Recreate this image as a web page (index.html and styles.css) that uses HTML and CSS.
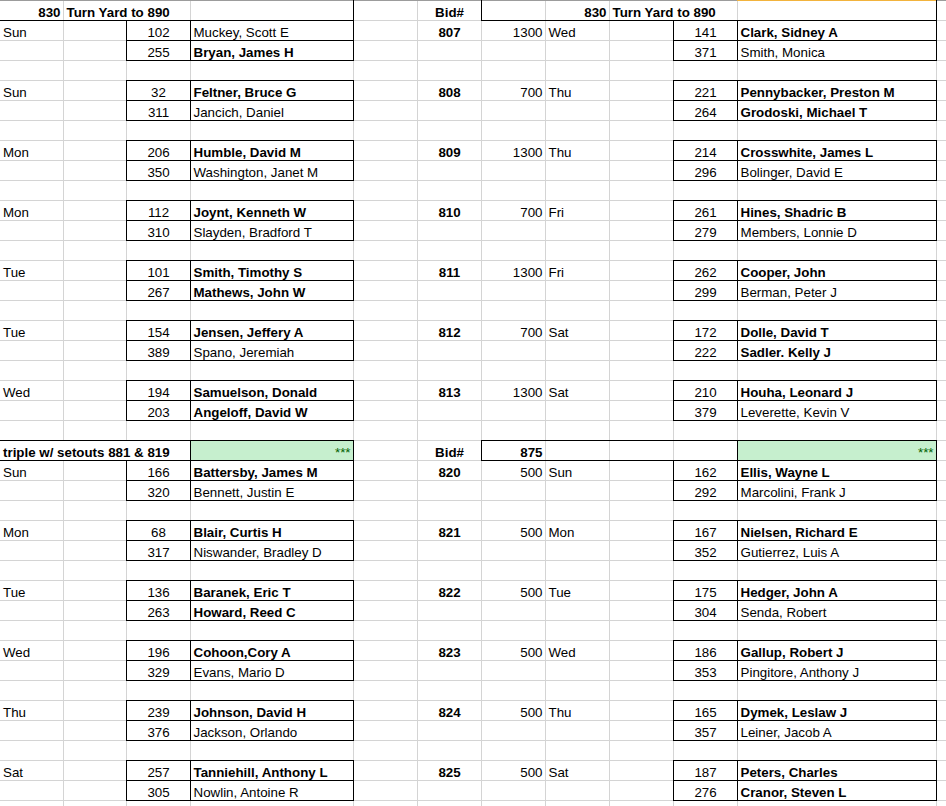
FILE: index.html
```html
<!DOCTYPE html>
<html>
<head>
<meta charset="utf-8">
<link rel="stylesheet" href="styles.css">
</head>
<body>
<table class="sheet">
<colgroup>
<col class="w63"><col class="w63"><col class="w64"><col class="w163"><col class="w64"><col class="w64"><col class="w64"><col class="w64"><col class="w64"><col class="w64"><col class="w199"><col class="w10">
</colgroup>
<tbody>
<tr class="top"><td class="r b bb">830</td><td colspan="2" class="b bb">Turn Yard to 890</td><td class="bb br"></td><td></td><td class="c b">Bid#</td><td class="bb bl"></td><td class="r b bb">830</td><td colspan="2" class="b bb">Turn Yard to 890</td><td class="bb br sel"></td><td></td></tr>

<tr><td>Sun</td><td></td><td class="c bx">102</td><td class="bx">Muckey, Scott E</td><td></td><td class="c b">807</td><td class="r">1300</td><td>Wed</td><td></td><td class="c bx">141</td><td class="bx b">Clark, Sidney A</td><td></td></tr>
<tr><td></td><td></td><td class="c bx">255</td><td class="bx b">Bryan, James H</td><td></td><td></td><td></td><td></td><td></td><td class="c bx">371</td><td class="bx">Smith, Monica</td><td></td></tr>
<tr><td></td><td></td><td></td><td></td><td></td><td></td><td></td><td></td><td></td><td></td><td></td><td></td></tr>

<tr><td>Sun</td><td></td><td class="c bx">32</td><td class="bx b">Feltner, Bruce G</td><td></td><td class="c b">808</td><td class="r">700</td><td>Thu</td><td></td><td class="c bx">221</td><td class="bx b">Pennybacker, Preston M</td><td></td></tr>
<tr><td></td><td></td><td class="c bx">311</td><td class="bx">Jancich, Daniel</td><td></td><td></td><td></td><td></td><td></td><td class="c bx">264</td><td class="bx b">Grodoski, Michael T</td><td></td></tr>
<tr><td></td><td></td><td></td><td></td><td></td><td></td><td></td><td></td><td></td><td></td><td></td><td></td></tr>

<tr><td>Mon</td><td></td><td class="c bx">206</td><td class="bx b">Humble, David M</td><td></td><td class="c b">809</td><td class="r">1300</td><td>Thu</td><td></td><td class="c bx">214</td><td class="bx b">Crosswhite, James L</td><td></td></tr>
<tr><td></td><td></td><td class="c bx">350</td><td class="bx">Washington, Janet M</td><td></td><td></td><td></td><td></td><td></td><td class="c bx">296</td><td class="bx">Bolinger, David E</td><td></td></tr>
<tr><td></td><td></td><td></td><td></td><td></td><td></td><td></td><td></td><td></td><td></td><td></td><td></td></tr>

<tr><td>Mon</td><td></td><td class="c bx">112</td><td class="bx b">Joynt, Kenneth W</td><td></td><td class="c b">810</td><td class="r">700</td><td>Fri</td><td></td><td class="c bx">261</td><td class="bx b">Hines, Shadric B</td><td></td></tr>
<tr><td></td><td></td><td class="c bx">310</td><td class="bx">Slayden, Bradford T</td><td></td><td></td><td></td><td></td><td></td><td class="c bx">279</td><td class="bx">Members, Lonnie D</td><td></td></tr>
<tr><td></td><td></td><td></td><td></td><td></td><td></td><td></td><td></td><td></td><td></td><td></td><td></td></tr>

<tr><td>Tue</td><td></td><td class="c bx">101</td><td class="bx b">Smith, Timothy S</td><td></td><td class="c b">811</td><td class="r">1300</td><td>Fri</td><td></td><td class="c bx">262</td><td class="bx b">Cooper, John</td><td></td></tr>
<tr><td></td><td></td><td class="c bx">267</td><td class="bx b">Mathews, John W</td><td></td><td></td><td></td><td></td><td></td><td class="c bx">299</td><td class="bx">Berman, Peter J</td><td></td></tr>
<tr><td></td><td></td><td></td><td></td><td></td><td></td><td></td><td></td><td></td><td></td><td></td><td></td></tr>

<tr><td>Tue</td><td></td><td class="c bx">154</td><td class="bx b">Jensen, Jeffery A</td><td></td><td class="c b">812</td><td class="r">700</td><td>Sat</td><td></td><td class="c bx">172</td><td class="bx b">Dolle, David T</td><td></td></tr>
<tr><td></td><td></td><td class="c bx">389</td><td class="bx">Spano, Jeremiah</td><td></td><td></td><td></td><td></td><td></td><td class="c bx">222</td><td class="bx b">Sadler. Kelly J</td><td></td></tr>
<tr><td></td><td></td><td></td><td></td><td></td><td></td><td></td><td></td><td></td><td></td><td></td><td></td></tr>

<tr><td>Wed</td><td></td><td class="c bx">194</td><td class="bx b">Samuelson, Donald</td><td></td><td class="c b">813</td><td class="r">1300</td><td>Sat</td><td></td><td class="c bx">210</td><td class="bx b">Houha, Leonard J</td><td></td></tr>
<tr><td></td><td></td><td class="c bx">203</td><td class="bx b">Angeloff, David W</td><td></td><td></td><td></td><td></td><td></td><td class="c bx">379</td><td class="bx">Leverette, Kevin V</td><td></td></tr>
<tr><td></td><td></td><td></td><td></td><td></td><td></td><td></td><td></td><td></td><td></td><td></td><td></td></tr>

<tr><td colspan="3" class="b bt bb">triple w/ setouts 881 &amp; 819</td><td class="r bx good">***</td><td></td><td class="c b">Bid#</td><td class="r b bt bb bl">875</td><td class="bt bb"></td><td class="bt bb"></td><td class="bt bb"></td><td class="r bx good">***</td><td></td></tr>

<tr><td>Sun</td><td></td><td class="c bx">166</td><td class="bx b">Battersby, James M</td><td></td><td class="c b">820</td><td class="r">500</td><td>Sun</td><td></td><td class="c bx">162</td><td class="bx b">Ellis, Wayne L</td><td></td></tr>
<tr><td></td><td></td><td class="c bx">320</td><td class="bx">Bennett, Justin E</td><td></td><td></td><td></td><td></td><td></td><td class="c bx">292</td><td class="bx">Marcolini, Frank J</td><td></td></tr>
<tr><td></td><td></td><td></td><td></td><td></td><td></td><td></td><td></td><td></td><td></td><td></td><td></td></tr>

<tr><td>Mon</td><td></td><td class="c bx">68</td><td class="bx b">Blair, Curtis H</td><td></td><td class="c b">821</td><td class="r">500</td><td>Mon</td><td></td><td class="c bx">167</td><td class="bx b">Nielsen, Richard E</td><td></td></tr>
<tr><td></td><td></td><td class="c bx">317</td><td class="bx">Niswander, Bradley D</td><td></td><td></td><td></td><td></td><td></td><td class="c bx">352</td><td class="bx">Gutierrez, Luis A</td><td></td></tr>
<tr><td></td><td></td><td></td><td></td><td></td><td></td><td></td><td></td><td></td><td></td><td></td><td></td></tr>

<tr><td>Tue</td><td></td><td class="c bx">136</td><td class="bx b">Baranek, Eric T</td><td></td><td class="c b">822</td><td class="r">500</td><td>Tue</td><td></td><td class="c bx">175</td><td class="bx b">Hedger, John A</td><td></td></tr>
<tr><td></td><td></td><td class="c bx">263</td><td class="bx b">Howard, Reed C</td><td></td><td></td><td></td><td></td><td></td><td class="c bx">304</td><td class="bx">Senda, Robert</td><td></td></tr>
<tr><td></td><td></td><td></td><td></td><td></td><td></td><td></td><td></td><td></td><td></td><td></td><td></td></tr>

<tr><td>Wed</td><td></td><td class="c bx">196</td><td class="bx b">Cohoon,Cory A</td><td></td><td class="c b">823</td><td class="r">500</td><td>Wed</td><td></td><td class="c bx">186</td><td class="bx b">Gallup, Robert J</td><td></td></tr>
<tr><td></td><td></td><td class="c bx">329</td><td class="bx">Evans, Mario D</td><td></td><td></td><td></td><td></td><td></td><td class="c bx">353</td><td class="bx">Pingitore, Anthony J</td><td></td></tr>
<tr><td></td><td></td><td></td><td></td><td></td><td></td><td></td><td></td><td></td><td></td><td></td><td></td></tr>

<tr><td>Thu</td><td></td><td class="c bx">239</td><td class="bx b">Johnson, David H</td><td></td><td class="c b">824</td><td class="r">500</td><td>Thu</td><td></td><td class="c bx">165</td><td class="bx b">Dymek, Leslaw J</td><td></td></tr>
<tr><td></td><td></td><td class="c bx">376</td><td class="bx">Jackson, Orlando</td><td></td><td></td><td></td><td></td><td></td><td class="c bx">357</td><td class="bx">Leiner, Jacob A</td><td></td></tr>
<tr><td></td><td></td><td></td><td></td><td></td><td></td><td></td><td></td><td></td><td></td><td></td><td></td></tr>

<tr><td>Sat</td><td></td><td class="c bx">257</td><td class="bx b">Tanniehill, Anthony L</td><td></td><td class="c b">825</td><td class="r">500</td><td>Sat</td><td></td><td class="c bx">187</td><td class="bx b">Peters, Charles</td><td></td></tr>
<tr><td></td><td></td><td class="c bx">305</td><td class="bx">Nowlin, Antoine R</td><td></td><td></td><td></td><td></td><td></td><td class="c bx">276</td><td class="bx b">Cranor, Steven L</td><td></td></tr>
<tr><td></td><td></td><td></td><td></td><td></td><td></td><td></td><td></td><td></td><td></td><td></td><td></td></tr>
<tr><td></td><td></td><td></td><td></td><td></td><td></td><td></td><td></td><td></td><td></td><td></td><td></td></tr>
</tbody>
</table>
</body>
</html>
```
FILE: styles.css
```css
html, body {
  margin: 0;
  padding: 0;
  overflow: hidden;
  background: #ffffff;
}

.sheet {
  border-collapse: collapse;
  table-layout: fixed;
  width: 946px;
  font-family: "Liberation Sans", Arial, sans-serif;
  font-size: 13.33px;
  color: #000000;
}

.sheet col {
  border-right: 1px solid #d4d4d4;
}

.w63 { width: 63px; }
.w64 { width: 64px; }
.w163 { width: 163px; }
.w199 { width: 199px; }
.w10 { width: 10px; }

.sheet tr {
  height: 20px;
  border-bottom: 1px solid #d4d4d4;
}

.sheet tr.top {
  border-top: 1px solid #9c9c9c;
}

.sheet td {
  padding: 0 2px 0 3px;
  vertical-align: bottom;
  line-height: 15px;
  white-space: nowrap;
  overflow: hidden;
}

.r { text-align: right; }
.c { text-align: center; }
.b { font-weight: bold; }

.bx { border: 1px solid #000000; }
.bt { border-top: 1px solid #000000; }
.bb { border-bottom: 1px solid #000000; }
.bl { border-left: 1px solid #000000; }
.br { border-right: 1px solid #000000; }

.sheet tr.top td.sel { border-top: 1px solid #f2b33d; }

.good {
  background: #c6efce;
  color: #006100;
}
```
